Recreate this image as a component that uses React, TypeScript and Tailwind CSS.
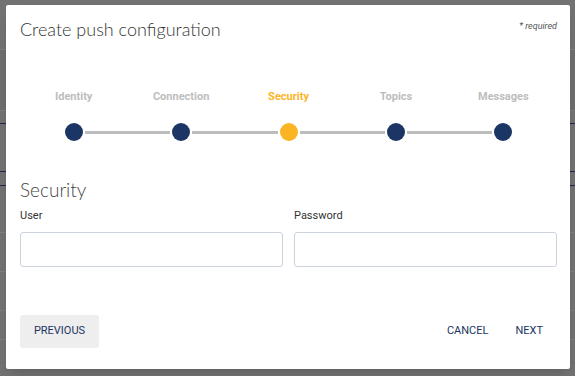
import React from 'react';

const steps = ['Identity', 'Connection', 'Security', 'Topics', 'Messages'];
const current = 2;

const Stepper = () => (
  <div className="flex mt-[49px]">
    {steps.map((s, i) => (
      <div key={s} className="flex-1 flex flex-col items-center">
        <div
          className={
            'text-[11px] font-bold leading-[14px] ' +
            (i === current ? 'text-[#fbb524]' : 'text-[#bdbdbd]')
          }
        >
          {s}
        </div>
        <div className="relative w-full h-[18px] mt-[19px] flex items-center justify-center">
          {i > 0 && (
            <div className="absolute left-0 right-1/2 mr-[11px] h-[3px] bg-[#bdbdbd]" />
          )}
          {i < steps.length - 1 && (
            <div className="absolute right-0 left-1/2 ml-[11px] h-[3px] bg-[#bdbdbd]" />
          )}
          <div
            className={
              'w-[18px] h-[18px] rounded-full ' +
              (i === current ? 'bg-[#fbb524]' : 'bg-[#1b3564]')
            }
          />
        </div>
      </div>
    ))}
  </div>
);

const Field = ({ label }: { label: string }) => (
  <div className="flex-1 flex flex-col">
    <label className="text-[11px] font-normal text-[#333] leading-[14px]">{label}</label>
    <input className="mt-[9px] h-[35px] border border-[#ccd3dc] rounded-[3px] outline-none px-2" />
  </div>
);

export default function App() {
  return (
    <div
      className="relative w-[575px] h-[376px] overflow-hidden bg-[#727272]"
      style={{ fontFamily: 'Roboto, "Liberation Sans", sans-serif' }}
    >
      {/* dimmed page behind the dialog */}
      <div className="flex flex-col">
        <div className="h-[50px] border-b border-[#808080]" />
        <div className="h-[61px] border-b border-[#7c7c7c] bg-[#6e6e6e]" />
        <div className="h-[13px] border-b border-[#1c2a44]" />
        <div className="h-[48px] border-b border-[#1c2a44]" />
        <div className="h-[14px] border-b border-[#1c2a44]" />
        <div className="h-[47px] border-b border-[#7e7e7e]" />
        <div className="h-[39px] border-b border-[#7e7e7e]" />
        <div className="h-[39px] border-b border-[#7e7e7e]" />
        <div className="h-[29px] border-b border-[#7e7e7e]" />
        <div className="pl-[343px] text-[13px] text-[#1e1e1e] leading-[16px] mt-[7px]">KERLINK</div>
      </div>

      <div className="absolute left-[6px] top-[5px] w-[564px] h-[364px] bg-white rounded-[2px] shadow-lg pl-[14px] pr-[13px] flex flex-col">
        <div className="flex justify-between items-start pt-[12px]">
          <h2
            className="text-[18px] leading-[24px] text-[#333] font-light"
            style={{ fontFamily: 'Lato, "Open Sans", sans-serif' }}
          >
            Create push configuration
          </h2>
          <span className="text-[9px] italic text-[#555] mt-[3px]">* required</span>
        </div>

        <Stepper />

        <h3
          className="mt-[37px] text-[19px] leading-[24px] text-[#444] font-light"
          style={{ fontFamily: 'Lato, "Open Sans", sans-serif' }}
        >
          Security
        </h3>

        <div className="flex gap-[11px] mt-[7px]">
          <Field label="User" />
          <Field label="Password" />
        </div>

        <div className="flex items-center justify-between mt-[48px]">
          <button className="h-[33px] w-[79px] rounded-[3px] bg-[#eeeeee] text-[11px] text-[#1b3564]">
            PREVIOUS
          </button>
          <div className="flex items-center gap-[27px] pr-[14px]">
            <button className="text-[11px] text-[#1b3564]">CANCEL</button>
            <button className="text-[11px] text-[#1b3564]">NEXT</button>
          </div>
        </div>
      </div>
    </div>
  );
}
